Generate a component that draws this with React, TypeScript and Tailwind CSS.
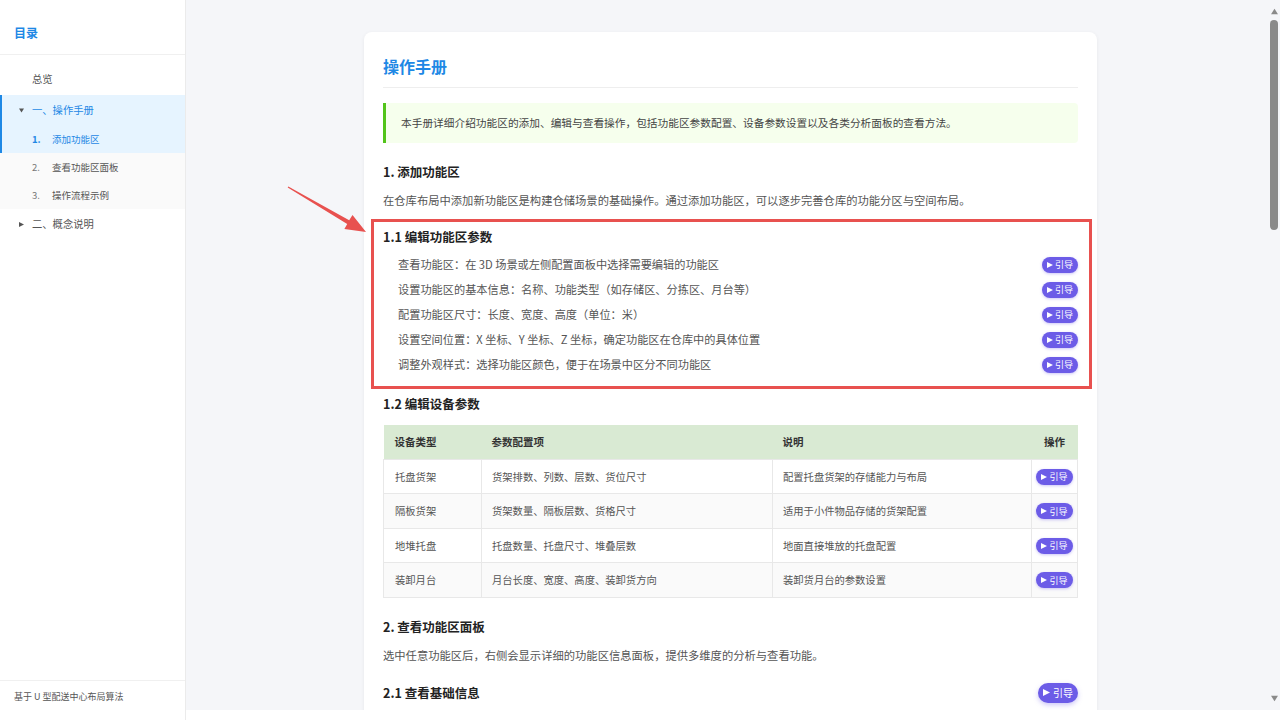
import type { ReactNode } from "react";

const editSteps = [
  "查看功能区：在 3D 场景或左侧配置面板中选择需要编辑的功能区",
  "设置功能区的基本信息：名称、功能类型（如存储区、分拣区、月台等）",
  "配置功能区尺寸：长度、宽度、高度（单位：米）",
  "设置空间位置：X 坐标、Y 坐标、Z 坐标，确定功能区在仓库中的具体位置",
  "调整外观样式：选择功能区颜色，便于在场景中区分不同功能区",
];

const devices = [
  ["托盘货架", "货架排数、列数、层数、货位尺寸", "配置托盘货架的存储能力与布局"],
  ["隔板货架", "货架数量、隔板层数、货格尺寸", "适用于小件物品存储的货架配置"],
  ["地堆托盘", "托盘数量、托盘尺寸、堆叠层数", "地面直接堆放的托盘配置"],
  ["装卸月台", "月台长度、宽度、高度、装卸货方向", "装卸货月台的参数设置"],
];

function Tri({ size, dir = "right", color = "currentColor" }: { size: number; dir?: "right" | "down" | "up"; color?: string }) {
  const pts = dir === "right" ? "0,0 10,5 0,10" : dir === "down" ? "0,1 10,1 5,9" : "0,9 10,9 5,1";
  return (
    <svg width={size} height={size} viewBox="0 0 10 10" className="shrink-0">
      <polygon points={pts} fill={color} />
    </svg>
  );
}

function GuideBtn({ big = false }: { big?: boolean }) {
  return (
    <button
      className={
        big
          ? "inline-flex items-center gap-[3px] h-[20px] px-[5px] rounded-full bg-[#6c5ce7] text-white text-[10px] leading-none shadow-[0_2px_5px_rgba(108,92,231,0.35)]"
          : "inline-flex items-center gap-[2px] h-[16px] px-[5px] rounded-full bg-[#6c5ce7] text-white text-[9px] leading-none shadow-[0_1px_3px_rgba(108,92,231,0.35)]"
      }
    >
      <Tri size={big ? 7 : 6} />
      引导
    </button>
  );
}

function H3({ children }: { children: ReactNode }) {
  return <h3 className="text-[12.5px] leading-[16px] font-bold text-[#222]">{children}</h3>;
}

function Para({ children, className = "" }: { children: ReactNode; className?: string }) {
  return <p className={`text-[11.3px] leading-[20px] text-[#555] ${className}`}>{children}</p>;
}

function DataTable({ head, rows }: { head: string[]; rows: string[][] }) {
  return (
    <table className="w-full table-fixed border-collapse text-left">
      <colgroup>
        <col className="w-[98px]" />
        <col className="w-[291px]" />
        <col className="w-[259px]" />
        <col className="w-[46px]" />
      </colgroup>
      <thead>
        <tr className="h-[34px] bg-[#d9ead3] text-[10.5px] font-bold text-[#333]">
          <th className="pl-[11px] font-bold">{head[0]}</th>
          <th className="pl-[10px] font-bold">{head[1]}</th>
          <th className="pl-[10px] font-bold">{head[2]}</th>
          <th className="text-center font-bold">{head[3]}</th>
        </tr>
      </thead>
      <tbody>
        {rows.map((r, i) => (
          <tr
            key={r[0]}
            className={`h-[34.5px] text-[10.3px] text-[#555] ${i % 2 === 1 ? "bg-[#fafafa]" : "bg-white"}`}
          >
            <td className="pl-[11px] border border-[#e8e8e8]">{r[0]}</td>
            <td className="pl-[10px] border border-[#e8e8e8]">{r[1]}</td>
            <td className="pl-[10px] border border-[#e8e8e8]">{r[2]}</td>
            <td className="text-center border border-[#e8e8e8]">
              <GuideBtn />
            </td>
          </tr>
        ))}
      </tbody>
    </table>
  );
}

function Sidebar() {
  return (
    <aside className="w-[186px] shrink-0 h-full flex flex-col bg-white border-r border-[#ebebeb]">
      <div className="h-[55px] pt-[25px] pl-[14px] border-b border-[#f0f0f0]">
        <div className="text-[12px] leading-[16px] font-bold text-[#1e88e5]">目录</div>
      </div>
      <nav className="flex-1 pt-[9px] text-[10.3px]">
        <div className="h-[30px] flex items-center pl-[32px] text-[#555]">总览</div>
        <div className="mt-[1px] border-l-2 border-[#1e88e5] bg-[#e6f4ff]">
          <div className="h-[30px] flex items-center pl-[17px] text-[#1e88e5]">
            <span className="w-[13px] flex text-[#555]">
              <Tri size={5} dir="down" />
            </span>
            一、操作手册
          </div>
          <div className="h-[28px] flex items-center pl-[30px] text-[9.5px] text-[#1e88e5]">
            <span className="w-[20px] font-bold">1.</span>
            添加功能区
          </div>
        </div>
        <div className="bg-[#fafafa]">
          <div className="h-[28px] flex items-center pl-[32px] text-[9.5px] text-[#555]">
            <span className="w-[20px] text-[#777]">2.</span>
            查看功能区面板
          </div>
          <div className="h-[28px] flex items-center pl-[32px] text-[9.5px] text-[#555]">
            <span className="w-[20px] text-[#777]">3.</span>
            操作流程示例
          </div>
        </div>
        <div className="h-[30px] flex items-center pl-[19px] text-[#555]">
          <span className="w-[13px] flex">
            <Tri size={5} />
          </span>
          二、概念说明
        </div>
      </nav>
      <div className="h-[40px] pt-[10px] pl-[14px] border-t border-[#f0f0f0] text-[9px] leading-[12px] text-[#555]">
        基于 U 型配送中心布局算法
      </div>
    </aside>
  );
}

function FakeScrollbar() {
  return (
    <div className="w-[12px] shrink-0 h-full bg-[#f5f6f9] flex flex-col items-center py-[8px]">
      <Tri size={7} dir="up" color="#8a8a8a" />
      <div className="mt-[5px] w-[8px] h-[210px] rounded-full bg-[#8a8a8a]" />
      <div className="flex-1" />
      <Tri size={7} dir="down" color="#8a8a8a" />
    </div>
  );
}

export default function App() {
  return (
    <div className="h-screen w-full flex bg-white font-['Noto_Sans_CJK_SC',sans-serif]">
      <Sidebar />
      <div className="flex-1 h-[710px] flex overflow-hidden bg-[#f5f6f9]">
        <main className="flex-1 h-full overflow-hidden">
          <div className="relative pt-[32px]">
            {/* annotation arrow */}
            <svg className="absolute left-0 top-0 w-[200px] h-[260px] pointer-events-none" viewBox="0 0 200 260">
              <polygon
                points="101.7,187.5 161.2,223.9 158.4,229 180,232 166.5,215 163.2,220.3 102.3,186.5"
                fill="#e8514f"
              />
            </svg>

            <div className="ml-[178px] w-[733px] h-[700px] bg-white rounded-t-[8px] shadow-[0_1px_4px_rgba(0,0,0,0.06)] px-[19px] pt-[22px]">
              <h1 className="text-[16px] leading-[24px] font-bold text-[#1e88e5] pb-[9px] border-b border-[#eeeeee]">
                操作手册
              </h1>

              <div className="mt-[15px] border-l-[3px] border-[#52c41a] bg-[#f6ffed] rounded-r-[4px] py-[10px] pl-[15px] text-[10.7px] leading-[20px] text-[#444]">
                本手册详细介绍功能区的添加、编辑与查看操作，包括功能区参数配置、设备参数设置以及各类分析面板的查看方法。
              </div>

              <div className="mt-[21px]">
                <H3>1. 添加功能区</H3>
              </div>
              <Para className="mt-[10px]">
                在仓库布局中添加新功能区是构建仓储场景的基础操作。通过添加功能区，可以逐步完善仓库的功能分区与空间布局。
              </Para>

              <section className="relative mt-[19px]">
                <div className="absolute -left-[12px] -right-[14px] -top-[10px] -bottom-[12px] border-[3px] border-[#e8514f] pointer-events-none" />
                <H3>1.1 编辑功能区参数</H3>
                <div className="mt-[7px]">
                  {editSteps.map((s) => (
                    <div key={s} className="h-[25px] flex items-center justify-between pl-[15px]">
                      <span className="text-[11.2px] text-[#555]">{s}</span>
                      <GuideBtn />
                    </div>
                  ))}
                </div>
              </section>

              <div className="mt-[19px]">
                <H3>1.2 编辑设备参数</H3>
              </div>
              <div className="mt-[13px]">
                <DataTable head={["设备类型", "参数配置项", "说明", "操作"]} rows={devices} />
              </div>

              <div className="mt-[21px]">
                <H3>2. 查看功能区面板</H3>
              </div>
              <Para className="mt-[10px]">
                选中任意功能区后，右侧会显示详细的功能区信息面板，提供多维度的分析与查看功能。
              </Para>

              <div className="mt-[18px] h-[20px] flex items-center justify-between">
                <H3>2.1 查看基础信息</H3>
                <GuideBtn big />
              </div>
            </div>
          </div>
        </main>
        <FakeScrollbar />
      </div>
    </div>
  );
}
